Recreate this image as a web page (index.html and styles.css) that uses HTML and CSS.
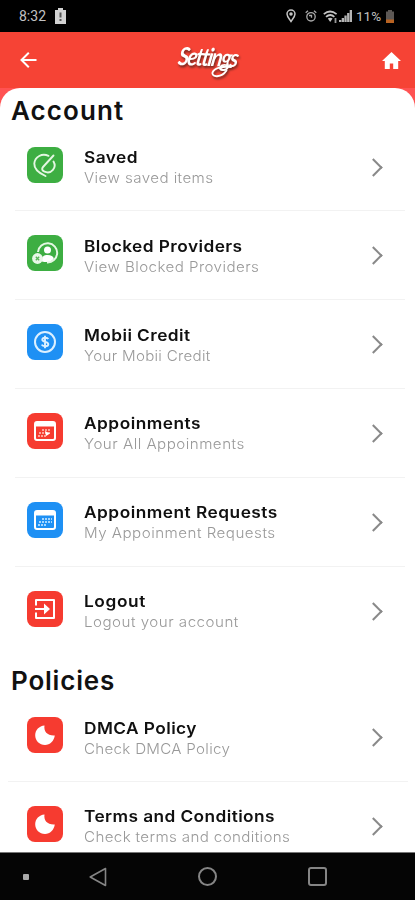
FILE: index.html
```html
<!DOCTYPE html>
<html lang="en">
<head>
<meta charset="utf-8">
<meta name="viewport" content="width=device-width, initial-scale=1">
<title>Settings</title>
<link rel="stylesheet" href="styles.css">
</head>
<body>
<div class="phone">
  <div class="status">
    <span class="time">8:32</span>
    <svg class="batt-alert" width="11" height="16" viewBox="0 0 11 16"><path d="M3 0h5v2h3v14H0V2h3z" fill="#d2d2d2"/><path d="M5.500 4.500v5M5.500 11v2" stroke="#555" stroke-width="2"/></svg>
    <span class="fill"></span>
    <svg class="pin" width="10" height="14" viewBox="0 0 10 14" fill="none" stroke="#c4c4c4" stroke-width="1.500"><path d="M5 12.500C3 9.500 1 7.500 1 5a4 4 0 0 1 8 0c0 2.500-2 4.500-4 7.500z"/><circle cx="5" cy="5" r="1" fill="#c4c4c4"/></svg>
    <svg class="alarm" width="12" height="12" viewBox="0 0 12 12" fill="none" stroke="#a9a9a9" stroke-width="1.300"><circle cx="6" cy="6.800" r="4.200"/><path d="M.7 2.800L3 .8M9 .8l2.300 2M4 5.500h2.500v2.300"/></svg>
    <svg class="wifi" width="15" height="13" viewBox="0 0 15 13" fill="none" stroke="#c4c4c4" stroke-width="1.700"><path d="M.8 4.200q6.200-5.400 12.800 0M3 6.800q4.200-3.600 8.400 0"/><path d="M4.800 8.600q2.400-1.800 4.800 0L7.200 12z" fill="#c4c4c4" stroke="none"/><path d="M12.500 8v5" stroke-width="1.800" stroke="#999"/></svg>
    <svg class="signal" width="13" height="12" viewBox="0 0 13 12" fill="#b5b5b5"><path d="M0 10h2.300v2H0zM2.700 8H5v4H2.700zM5.400 5.500h2.300V12H5.400zM8.100 3h2.200v9H8.100zM10.700 0H13v12h-2.300z"/></svg>
    <span class="pct">11%</span>
    <svg class="batt" width="8" height="13" viewBox="0 0 8 13"><path d="M2 0h4v1.500h2V10H0V1.500h2z" fill="#5d5855"/><path d="M0 9.500h8V13H0z" fill="#b96322"/></svg>
  </div>
  <header class="bar">
    <svg width="17" height="16" viewBox="0 0 17 16" fill="none" stroke="#fff" stroke-width="2"><path d="M16.500 8H1.800M8.800.8L1.500 8l7.300 7.200"/></svg>
    <div class="logo"><span class="word">Settings</span><svg class="swash" width="28" height="17" viewBox="0 0 28 17" fill="none" stroke="#fff" stroke-width="1.900" stroke-linecap="round"><path d="M22 5C14 4 5 6 3.500 10.500c-1.500 5 9 5.500 14-2"/></svg></div>
    <svg width="19" height="17" viewBox="0 0 19 17" fill="#fff"><path d="M9.500 0L19 9h-2.800v8h-5v-5.500H7.800V17h-5V9H0z"/></svg>
  </header>
  <main class="backdrop">
    <div class="sheet">
      <section class="account">
        <h2>Account</h2>
        <div class="row">
          <div class="icon green"><svg viewBox="0 0 36 36" fill="none" stroke="#e4f7e2" stroke-width="1.900" stroke-linecap="round"><path d="M21.500 8.800C15 6 8 9.500 7.300 16.500 7 22.500 13 26.500 18.500 29M26.500 14.500c3.500 6-2 13-9 10.200-2.500-1-3-3-1.500-4.700L26.500 8.500"/></svg></div>
          <div class="text"><h3 class="t1">Saved</h3><p class="s1">View saved items</p></div><i class="chev"></i>
        </div>
        <div class="row">
          <div class="icon green"><svg viewBox="0 0 36 36"><path d="M11 17a9.600 9.600 0 1 1 9 10.400" fill="none" stroke="#e4f7e2" stroke-width="2"/><circle cx="20.500" cy="15" r="3.500" fill="#fff"/><path d="M15 26.500c-1-5 2-6.500 5.500-6.500s6 1.500 6.300 3.500c-2 3-6 4.500-11.800 3z" fill="#fff"/><circle cx="10.500" cy="23.500" r="5.400" fill="#e8f8e7"/><path d="M8.800 21.800l3.400 3.400M12.200 21.800l-3.400 3.400" stroke="#58b456" stroke-width="1.300"/></svg></div>
          <div class="text"><h3 class="t2">Blocked Providers</h3><p class="s2">View Blocked Providers</p></div><i class="chev"></i>
        </div>
        <div class="row">
          <div class="icon blue"><svg viewBox="0 0 36 36" fill="none" stroke="#dcf0ff"><circle cx="18" cy="18" r="10" stroke-width="2"/><path d="M21.300 15c-.8-1.500-6-2-6 .8 0 2.700 6 1.600 6 4.500 0 2.700-5.600 2.400-6.600.4M18 11.800v12.400" stroke-width="1.900"/></svg></div>
          <div class="text"><h3 class="t3">Mobii Credit</h3><p class="s3">Your Mobii Credit</p></div><i class="chev"></i>
        </div>
        <div class="row">
          <div class="icon red"><svg viewBox="0 0 36 36" fill="none" stroke="#fff"><rect x="8" y="9" width="20" height="18" rx="2" stroke-width="2"/><path d="M8 11.500h20" stroke-width="4"/><path d="M15 17h9M12 20h12M11 23h8" stroke="#ffc5bd" stroke-width="1.500" stroke-dasharray="2 1"/><path d="M18 18l5 2.500-4 2.500z" fill="#fff" stroke="none"/></svg></div>
          <div class="text"><h3 class="t4">Appoinments</h3><p class="s4">Your All Appoinments</p></div><i class="chev"></i>
        </div>
        <div class="row">
          <div class="icon blue"><svg viewBox="0 0 36 36" fill="none" stroke="#fff"><rect x="8" y="9" width="20" height="18" rx="2" stroke-width="2"/><path d="M8 11.500h20" stroke-width="4"/><path d="M15 17h10M12 20h13M11 23h9" stroke="#a4d6ff" stroke-width="1.800" stroke-dasharray="2 1"/></svg></div>
          <div class="text"><h3 class="t5">Appoinment Requests</h3><p class="s5">My Appoinment Requests</p></div><i class="chev"></i>
        </div>
        <div class="row last">
          <div class="icon red"><svg viewBox="0 0 36 36"><path d="M9 14.500V9h18v18H9v-5.500" fill="none" stroke="#fff" stroke-width="2" stroke-linejoin="round"/><path d="M8 17h9v-4.500l6 5.500-6 5.500V19H8z" fill="#fff"/></svg></div>
          <div class="text"><h3 class="t6">Logout</h3><p class="s6">Logout your account</p></div><i class="chev"></i>
        </div>
      </section>
      <section class="policies">
        <h2>Policies</h2>
        <div class="row">
          <div class="icon red"><svg viewBox="0 0 36 36"><path d="M17.500 8.500c-1 6 3 10.500 10.300 10C27 24 23 28 18 28c-5.500 0-9.800-4.300-9.800-9.700 0-5.300 4-9.300 9.300-9.800z" fill="#fff"/></svg></div>
          <div class="text"><h3 class="t7">DMCA Policy</h3><p class="s7">Check DMCA Policy</p></div><i class="chev"></i>
        </div>
        <div class="row last">
          <div class="icon red"><svg viewBox="0 0 36 36"><path d="M17.500 8.500c-1 6 3 10.500 10.300 10C27 24 23 28 18 28c-5.500 0-9.800-4.300-9.800-9.700 0-5.300 4-9.300 9.300-9.800z" fill="#fff"/></svg></div>
          <div class="text"><h3 class="t8">Terms and Conditions</h3><p class="s8">Check terms and conditions</p></div><i class="chev"></i>
        </div>
      </section>
    </div>
  </main>
  <nav class="nav">
    <span class="dot"></span>
    <svg class="back" width="18" height="20" viewBox="0 0 18 20" fill="none" stroke="#858585" stroke-width="1.600" stroke-linejoin="round"><path d="M16.500 1.500v17L1.200 10z"/></svg>
    <span class="home"></span>
    <span class="recent"></span>
  </nav>
</div>
</body>
</html>
```

FILE: styles.css
```css
* { box-sizing: border-box; }
body { margin: 0; font-family: Inter, "Liberation Sans", sans-serif; background: #fff; }
h2, h3, p { margin: 0; white-space: nowrap; transform-origin: 0 50%; }
svg { display: block; flex: none; }
.phone { width: 415px; height: 900px; display: flex; flex-direction: column; overflow: hidden; }
.status { flex: none; height: 32px; background: #000; display: flex; align-items: center; padding: 0 21px 0 19px; color: #c2c2c2; font-family: Roboto, sans-serif; font-size: 14px; }
.batt-alert { margin-left: 9px; }
.fill { flex: 1; }
.alarm { margin-left: 9px; }
.wifi { margin-left: 6px; }
.signal { margin-left: 1px; }
.pct { margin-left: 4px; width: 26px; font-size: 13.500px; }
.batt { margin-left: 4px; }
.time { font-size: 14px; }
.bar { flex: none; height: 56px; background: #f64335; display: flex; align-items: center; justify-content: space-between; padding: 0 14px 0 20px; }
.logo { position: relative; width: 66px; height: 40px; margin-left: 5px; display: flex; align-items: flex-start; filter: drop-shadow(1px 2px 1px #702820); }
.word { display: block; transform-origin: 0 50%; transform: translateY(-1px) rotate(2deg) skewX(-8deg) scaleX(.84); font-family: Lato, sans-serif; font-style: italic; font-weight: 700; font-size: 25px; line-height: 32px; letter-spacing: -2px; color: #fff; }
.swash { position: absolute; left: 30px; top: 22px; }
.backdrop { flex: 1; min-height: 0; background: #ff5252; overflow: hidden; }
.sheet { height: 100%; background: #fff; border-radius: 20px 20px 0 0; overflow: hidden; }
h2 { padding-left: 11px; font-size: 26px; font-weight: 600; color: #111; }
.account h2 { height: 34.600px; line-height: 45px; letter-spacing: 1.100px; }
.policies h2 { height: 37.700px; line-height: 51px; letter-spacing: .8px; }
.row { height: 88.800px; display: flex; align-items: flex-start; padding: 24px 23px 0 11px; margin: 0 10px 0 15px; border-bottom: 1px solid #f2f2f2; }
.policies .row { margin: 0 7px 0 8px; padding: 24px 26px 0 18px; }
.row.last { border-bottom-color: transparent; }
.icon { flex: none; width: 36px; height: 36px; border-radius: 8px; margin-left: 1px; }
.icon svg { width: 36px; height: 36px; }
.green { background: #3dae42; }
.blue { background: #1e90f4; }
.red { background: #f63b30; }
.text { flex: 1; min-width: 0; margin: -.5px 0 0 21px; }
h3 { font-size: 16px; line-height: 22px; font-weight: 600; color: #101010; letter-spacing: .4px; transform: scaleX(1.080); }
p { font-size: 14.500px; line-height: 20px; font-weight: 300; color: #999; letter-spacing: .4px; transform: scaleX(1.045); }
.t3, .t8 { letter-spacing: .38px; }
.t4, .t5 { letter-spacing: .46px; }
.t6 { letter-spacing: .55px; }
.s3, .s7 { letter-spacing: .27px; }
.s4, .s5, .s6 { letter-spacing: .46px; }
.s8 { letter-spacing: .34px; }
.chev { flex: none; width: 13px; height: 13px; border: solid #898989; border-width: 2px 2px 0 0; transform: translateX(-2px) rotate(45deg); margin-top: 14px; }
.nav { flex: none; height: 48px; background: #050505; border-top: 1px solid #777; display: flex; align-items: center; }
.dot { width: 6px; height: 6px; border-radius: 1px; background: #aaa; margin-left: 23px; }
.back { margin-left: 60px; }
.home { width: 19px; height: 19px; border: 2px solid #858585; border-radius: 50%; margin-left: 91px; }
.recent { width: 19px; height: 19px; border: 2px solid #858585; border-radius: 3px; margin-left: 91px; }
```
